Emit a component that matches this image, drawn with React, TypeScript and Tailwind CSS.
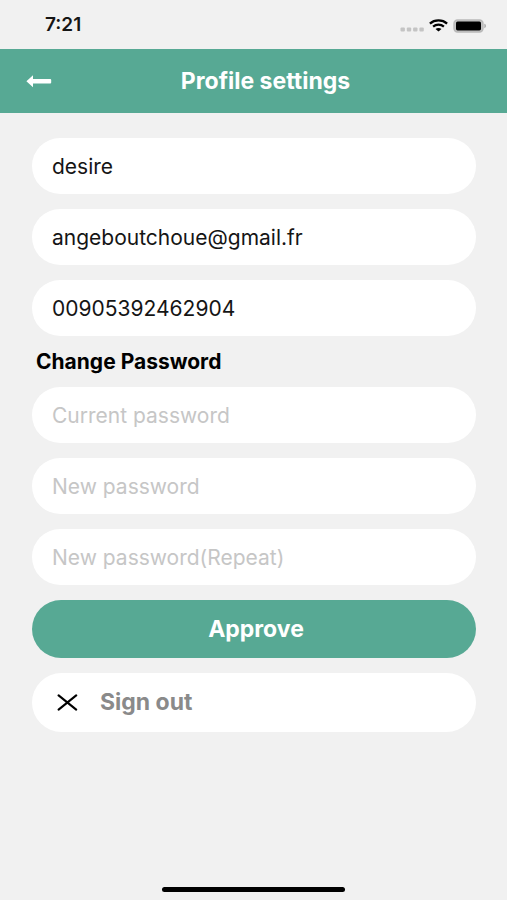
import React, { useState } from "react";

interface FieldProps {
  label: string;
  type: string;
  value: string;
  placeholder?: string;
  onChange: (value: string) => void;
}

const Field: React.FC<FieldProps> = ({
  label,
  type,
  value,
  placeholder,
  onChange,
}) => (
  <input
    type={type}
    aria-label={label}
    value={value}
    placeholder={placeholder}
    onChange={(e) => onChange(e.target.value)}
    className="h-14 w-full rounded-[30px] bg-white px-5 text-[21px] text-[#151515] outline-none placeholder:text-[#c6c6c6]"
  />
);

const StatusBar: React.FC = () => (
  <div className="flex h-[49px] items-center justify-between pt-[2px] pr-5 pl-[45px]">
    <span className="text-[19px] font-semibold text-[#151515]">7:21</span>
    <div className="flex items-center gap-[5px]">
      {/* No signal */}
      <svg width="24" height="12" viewBox="0 0 24 12" fill="#c4c4c4">
        <rect x="0.5" y="7.5" width="4.4" height="4" rx="1" />
        <rect x="6.8" y="7.5" width="4.4" height="4" rx="1" />
        <rect x="13.1" y="7.5" width="4.4" height="4" rx="1" />
        <rect x="19.4" y="7.5" width="4.4" height="4" rx="1" />
      </svg>
      {/* Wifi */}
      <svg width="19" height="13" viewBox="0 0 19 13" fill="none" stroke="#000" strokeWidth="2.3">
        <path d="M0.9 4.6C5.6 0.4 13.4 0.4 18.1 4.6" />
        <path d="M4.1 7.6C7.2 5 11.8 5 14.9 7.6" />
        <path d="M9.5 12.4L6.5 10.1C8.2 8.7 10.8 8.7 12.5 10.1Z" fill="#000" stroke="none" />
      </svg>
      {/* Battery */}
      <svg width="34" height="14" viewBox="0 0 34 14">
        <rect x="1" y="1" width="29" height="12" rx="3.5" fill="#c4c4c4" stroke="#b9b9b9" strokeWidth="1.4" />
        <rect x="3" y="2.6" width="25" height="8.8" rx="1.6" fill="#000" />
        <path d="M31.4 4.8C33.4 5.4 33.4 8.6 31.4 9.2Z" fill="#a5a5a5" />
      </svg>
    </div>
  </div>
);

export default function App() {
  const [name, setName] = useState("desire");
  const [email, setEmail] = useState("angeboutchoue@gmail.fr");
  const [phone, setPhone] = useState("00905392462904");
  const [current, setCurrent] = useState("");
  const [password, setPassword] = useState("");
  const [repeat, setRepeat] = useState("");

  return (
    <div className="flex min-h-screen flex-col bg-[#f1f1f1] font-[Inter,sans-serif]">
      <StatusBar />

      <header className="grid h-16 grid-cols-[1fr_auto_1fr] items-center bg-[#57a994] px-[26px] text-white">
        <button type="button" aria-label="Back" className="justify-self-start">
          <svg width="26" height="14" viewBox="0 0 26 14" fill="currentColor">
            <path d="M0.4 7.2L7 1.2V5H24.2Q25.2 5 25.2 6V8.5Q25.2 9.5 24.2 9.5H7V13.2Z" />
          </svg>
        </button>
        <h1 className="pl-6 text-[23px] font-bold">Profile settings</h1>
      </header>

      <main className="flex flex-col gap-[15px] pt-[25px] pr-[31px] pl-8">
        <Field label="Name" type="text" value={name} onChange={setName} />
        <Field label="Email" type="text" value={email} onChange={setEmail} />
        <Field label="Phone" type="tel" value={phone} onChange={setPhone} />

        <h2 className="-my-[3px] px-1 text-[21px] leading-[27px] font-bold text-black">
          Change Password
        </h2>

        <Field
          label="Current password"
          type="password"
          placeholder="Current password"
          value={current}
          onChange={setCurrent}
        />
        <Field
          label="New password"
          type="password"
          placeholder="New password"
          value={password}
          onChange={setPassword}
        />
        <Field
          label="Repeat new password"
          type="password"
          placeholder="New password(Repeat)"
          value={repeat}
          onChange={setRepeat}
        />

        <button
          type="button"
          className="h-[58px] w-full rounded-[30px] bg-[#57a994] pl-1 text-[23px] font-bold text-white"
        >
          Approve
        </button>

        <button
          type="button"
          className="flex h-[59px] w-full items-center gap-[22px] rounded-[30px] bg-white px-[25px] text-[23px] font-bold text-[#8a8a8a]"
        >
          <svg width="21" height="17" viewBox="0 0 21 17" fill="none" stroke="#000" strokeWidth="2.1" strokeLinecap="round">
            <path d="M1.6 1.4L19.2 15.6M19.2 1.4L1.6 15.6" />
          </svg>
          Sign out
        </button>
      </main>

      {/* Home indicator */}
      <div className="mt-auto flex justify-center pb-2">
        <div className="h-[5px] w-[36%] rounded-full bg-black" />
      </div>
    </div>
  );
}
